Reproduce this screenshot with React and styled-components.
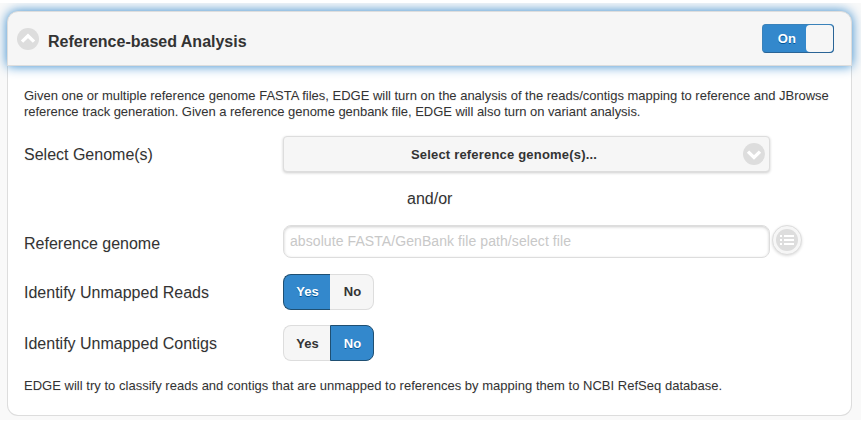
import React from "react";
import styled, { createGlobalStyle, css } from "styled-components";

const GlobalStyle = createGlobalStyle`
  * { box-sizing: border-box; }
  body {
    margin: 0;
    background: #fff;
    color: #333;
    font-family: "Liberation Sans", Arial, sans-serif;
    font-size: 16px;
    text-shadow: 0 1px 0 #f3f3f3;
  }
`;

const Page = styled.main`
  margin-top: 3px;
  height: 417px;
  padding: 8px 9px 0 7px;
  background: #f9f9f9;
  overflow: hidden;
`;

const Panel = styled.section`
  height: 405px;
  border-radius: 11px;
`;

const Header = styled.header`
  position: relative;
  display: flex;
  align-items: center;
  height: 55px;
  padding: 0 17px 0 9px;
  background: #f6f6f6;
  border: 1px solid #ddd;
  border-radius: 11px 11px 0 0;
  box-shadow: 0 0 12px #3388cc;
`;

const Title = styled.h1`
  flex: 1;
  margin: 6px 0 0 9px;
  font-size: 16px;
  line-height: 20px;
  font-weight: 700;
`;

const Disc = styled.svg`
  display: block;
  width: 22px;
  height: 22px;
  flex: none;
`;

const Toggle = styled.button`
  display: flex;
  width: 72px;
  height: 29px;
  margin: 0;
  padding: 0;
  background: #3388cc;
  border: 1px solid;
  border-color: #3a82ba #2a6496 #2a6496 #3a82ba;
  border-radius: 4px;
  color: #fff;
  font: 700 13px/27px "Liberation Sans", Arial, sans-serif;
  text-shadow: 0 1px 0 #005599;
`;

const ToggleLabel = styled.span`
  flex: 1;
  padding-left: 5px;
  text-align: center;
  letter-spacing: 0.3px;
`;

const Knob = styled.span`
  width: 27px;
  height: 27px;
  background: #f6f6f6;
  border-radius: 4px;
`;

const Body = styled.div`
  height: 350px;
  padding: 22px 16px 0;
  background: #fff;
  border: 1px solid #ddd;
  border-top: 0;
  border-radius: 0 0 11px 11px;
`;

const Note = styled.p`
  margin: 0;
  font-size: 13px;
  line-height: 16px;
  letter-spacing: ${(p) => p.$spacing || 0}px;
  white-space: nowrap;
`;

const Form = styled.div`
  display: grid;
  grid-template-columns: 259px 487px auto;
  grid-template-rows: 37px 53px 33px 16px 36px 15px 36px;
  margin: 15px 0 17px;
`;

const Label = styled.label`
  grid-column: 1;
  grid-row: ${(p) => p.$row};
  align-self: center;
  line-height: 20px;
  padding-top: ${(p) => p.$drop || 2}px;
`;

const Select = styled.button`
  grid-column: 2;
  grid-row: 1;
  display: flex;
  align-items: center;
  margin: 1px 0 0;
  padding: 0 4px 0 0;
  background: #f6f6f6;
  border: 1px solid #ddd;
  border-radius: 4px;
  box-shadow: 0 1px 3px rgba(0, 0, 0, 0.2);
  color: #333;
  font: 700 13px/16px "Liberation Sans", Arial, sans-serif;
  letter-spacing: 0.19px;
  text-shadow: 0 1px 0 #f3f3f3;
`;

const SelectText = styled.span`
  flex: 1;
  text-align: center;
  padding: 1px 19px 0 0;
`;

const Joiner = styled.div`
  grid-column: 2;
  grid-row: 2;
  align-self: center;
  padding-left: 124px;
  line-height: 20px;
`;

const PathInput = styled.input`
  grid-column: 2;
  grid-row: 3;
  width: 487px;
  height: 33px;
  margin: 0;
  padding: 0 6px 2px;
  background: #fff;
  border: 1px solid #ddd;
  border-radius: 8px;
  box-shadow: inset 0 1px 3px rgba(0, 0, 0, 0.2);
  font: 14px "Liberation Sans", Arial, sans-serif;
  letter-spacing: 0.08px;
  &::placeholder { color: #c8c8c8; opacity: 1; }
`;

const FileButton = styled.button`
  grid-column: 3;
  grid-row: 3;
  display: flex;
  align-items: center;
  justify-content: center;
  width: 30px;
  height: 30px;
  margin: 0 0 0 2px;
  padding: 0;
  background: #f6f6f6;
  border: 1px solid #ddd;
  border-radius: 50%;
  box-shadow: 0 1px 3px rgba(0, 0, 0, 0.15);
`;

const Choice = styled.div`
  grid-column: 2;
  grid-row: ${(p) => p.$row};
  display: flex;
`;

const selected = css`
  background: #3388cc;
  border-color: #1f4f72;
  color: #fff;
  text-shadow: 0 1px 0 #005599;
`;

const Option = styled.button`
  width: ${(p) => p.$width}px;
  margin: 0;
  padding: ${(p) => p.$drop || 0}px 0 0 ${(p) => (p.$end && !p.$on ? 2 : 1)}px;
  background: #f6f6f6;
  border: 1px solid #ddd;
  border-radius: ${(p) => (p.$end ? "0 8px 8px 0" : "8px 0 0 8px")};
  border-${(p) => (p.$end ? "left" : "right")}-width: ${(p) => (p.$end && p.$on ? 1 : 0)}px;
  color: #333;
  font: 700 13px/16px "Liberation Sans", Arial, sans-serif;
  text-shadow: 0 1px 0 #f3f3f3;
  ${(p) => p.$on && selected}
`;

function Chevron({ up }) {
  return (
    <Disc viewBox="0 0 22 22">
      <circle cx="11" cy="11" r="11" fill="#ddd" />
      <path
        d={up ? "M5 13.6 11 7.8l6 5.8" : "M5 8.6 11 14.4l6-5.8"}
        fill="none"
        stroke="#fff"
        strokeWidth="3.4"
      />
    </Disc>
  );
}

function ListIcon() {
  return (
    <Disc viewBox="0 0 22 22">
      <circle cx="11" cy="11" r="11" fill="#ddd" />
      <path
        d="M4 7h2M8 7h10M4 11h2M8 11h10M4 15h2M8 15h10"
        stroke="#fff"
        strokeWidth="1.8"
      />
    </Disc>
  );
}

function YesNo({ row, value, drop }) {
  return (
    <Choice $row={row}>
      <Option $width={47} $drop={drop} $on={value === "Yes"}>Yes</Option>
      <Option $width={44} $drop={drop} $end $on={value === "No"}>No</Option>
    </Choice>
  );
}

export default function App() {
  return (
    <>
      <GlobalStyle />
      <Page>
        <Panel>
          <Header>
            <Chevron up />
            <Title>Reference-based Analysis</Title>
            <Toggle>
              <ToggleLabel>On</ToggleLabel>
              <Knob />
            </Toggle>
          </Header>
          <Body>
            <Note $spacing={-0.01}>
              Given one or multiple reference genome FASTA files, EDGE will turn on the analysis of the reads/contigs mapping to reference and JBrowse
            </Note>
            <Note $spacing={-0.04}>
              reference track generation. Given a reference genome genbank file, EDGE will also turn on variant analysis.
            </Note>
            <Form>
              <Label $row={1}>Select Genome(s)</Label>
              <Select>
                <SelectText>Select reference genome(s)...</SelectText>
                <Chevron />
              </Select>
              <Joiner>and/or</Joiner>
              <Label $row={3} $drop={5}>Reference genome</Label>
              <PathInput placeholder="absolute FASTA/GenBank file path/select file" />
              <FileButton aria-label="Select file">
                <ListIcon />
              </FileButton>
              <Label $row={5}>Identify Unmapped Reads</Label>
              <YesNo row={5} value="Yes" />
              <Label $row={7}>Identify Unmapped Contigs</Label>
              <YesNo row={7} value="No" drop={2} />
            </Form>
            <Note $spacing={0.02}>
              EDGE will try to classify reads and contigs that are unmapped to references by mapping them to NCBI RefSeq database.
            </Note>
          </Body>
        </Panel>
      </Page>
    </>
  );
}
